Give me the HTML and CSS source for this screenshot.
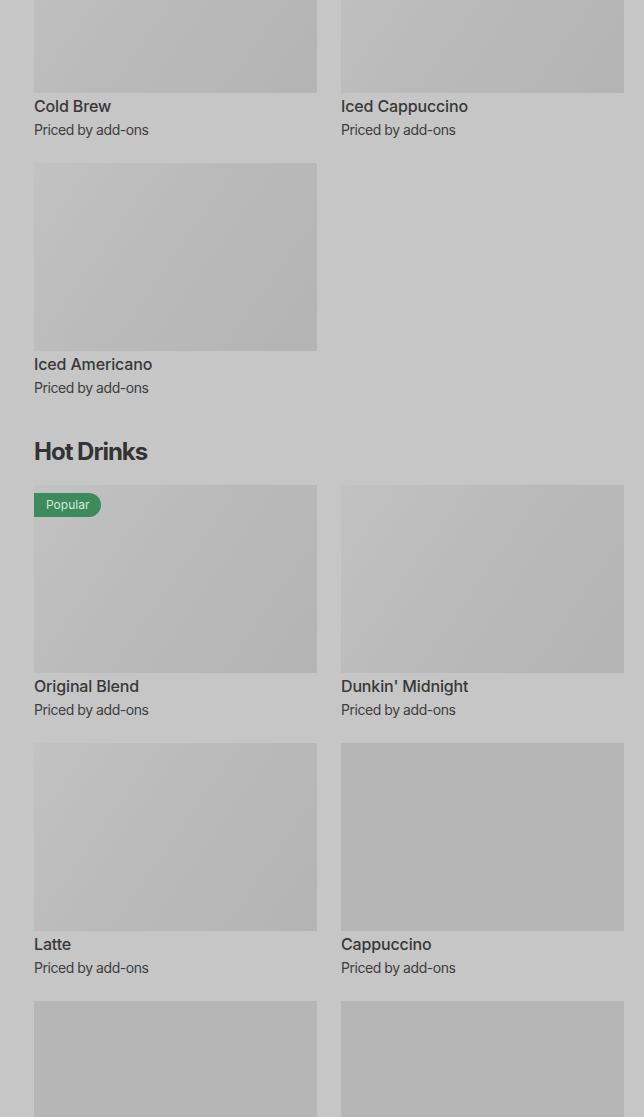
FILE: index.html
```html
<!DOCTYPE html>
<html>
<head>
<meta charset="utf-8">
<link rel="stylesheet" href="styles.css">
</head>
<body>
<div class="page">
  <section class="section">
    <div class="grid">
      <div class="card"><div class="thumb"></div><div class="title">Cold Brew</div><div class="sub">Priced by add-ons</div></div>
      <div class="card"><div class="thumb"></div><div class="title">Iced Cappuccino</div><div class="sub">Priced by add-ons</div></div>
      <div class="card"><div class="thumb"></div><div class="title">Iced Americano</div><div class="sub">Priced by add-ons</div></div>
    </div>
  </section>
  <section class="section">
    <h2 class="heading">Hot Drinks</h2>
    <div class="grid">
      <div class="card"><div class="thumb"><span class="badge">Popular</span></div><div class="title">Original Blend</div><div class="sub">Priced by add-ons</div></div>
      <div class="card"><div class="thumb"></div><div class="title">Dunkin' Midnight</div><div class="sub">Priced by add-ons</div></div>
      <div class="card"><div class="thumb"></div><div class="title">Latte</div><div class="sub">Priced by add-ons</div></div>
      <div class="card"><div class="thumb flat"></div><div class="title">Cappuccino</div><div class="sub">Priced by add-ons</div></div>
      <div class="card"><div class="thumb flat"></div><div class="title">Americano</div><div class="sub">Priced by add-ons</div></div>
      <div class="card"><div class="thumb flat"></div><div class="title">Espresso</div><div class="sub">Priced by add-ons</div></div>
    </div>
  </section>
</div>
</body>
</html>
```

FILE: styles.css
```css
html, body {
  margin: 0;
  padding: 0;
  background: #c6c6c6;
  overflow: hidden;
}
body {
  font-family: Inter, "Noto Sans", sans-serif;
  color: #3a3a3a;
}
.page {
  margin-top: -95px;
  padding: 0 20px 0 34px;
}
.section {
  display: flex;
  flex-direction: column;
}
.grid {
  display: grid;
  grid-template-columns: 283px 283px;
  column-gap: 24px;
  row-gap: 25px;
}
.card {
  display: flex;
  flex-direction: column;
}
.thumb {
  position: relative;
  height: 188px;
  background: linear-gradient(125deg, #c2c2c2 0%, #bababa 45%, #b4b4b4 100%);
}
.thumb.flat {
  background: #b6b6b6;
}
.title {
  margin-top: 3px;
  font-size: 16px;
  line-height: 20px;
  font-weight: 500;
  color: #383838;
  letter-spacing: -0.15px;
}
.sub {
  margin-top: 5px;
  font-size: 14px;
  line-height: 17px;
  color: #3e3e3e;
  letter-spacing: -0.45px;
}
.heading {
  margin: 41px 0 18px;
  font-size: 24px;
  line-height: 30px;
  font-weight: 700;
  letter-spacing: -1px;
  color: #333333;
}
.badge {
  position: absolute;
  top: 8px;
  left: 0;
  height: 24px;
  line-height: 24px;
  padding: 0 12px 0 12px;
  background: #3d8a5d;
  color: #dbe8df;
  font-size: 12px;
  border-radius: 0 12px 12px 0;
}
```
